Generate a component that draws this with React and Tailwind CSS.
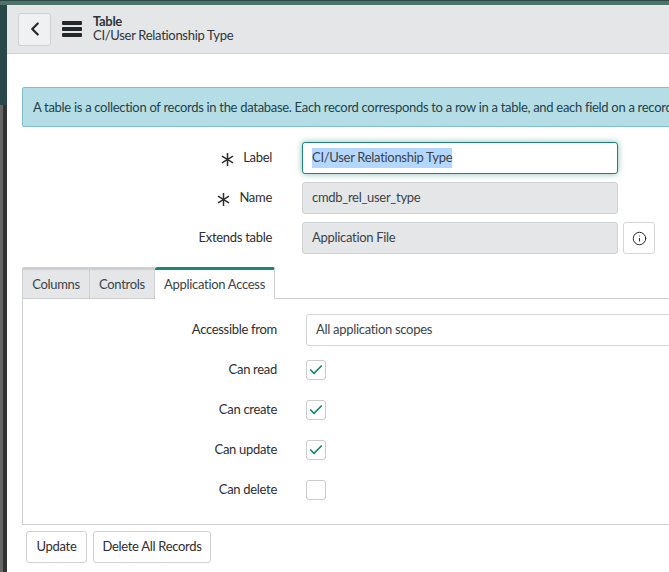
import { ChevronLeft, Info, Check } from 'lucide-react'

const font = "font-['Lato','Noto_Sans',sans-serif]"

function Star() {
  return (
    <svg width="13" height="15" viewBox="0 0 13 15" className="text-[#2e2e2e] mt-[3px]" fill="none" stroke="currentColor" strokeWidth="1.5">
      <path d="M6.5 1v13M1 4.2l11 6.6M12 4.2 1 10.8" />
    </svg>
  )
}

function FieldRow({ label, required, children, after }) {
  return (
    <div className="flex items-center h-8">
      <div className="w-[265px] flex items-center justify-end gap-[9px] text-[13px] text-[#2e2e2e]">
        {required && <Star />}
        <span>{label}</span>
      </div>
      <div className="ml-[30px] w-[316px] shrink-0">{children}</div>
      {after}
    </div>
  )
}

function ReadOnly({ value }) {
  return (
    <div className="h-8 rounded-[3px] border border-[#cfd2d5] bg-[#e4e6e8] px-[9px] flex items-center text-[13px] text-[#3c4448]">
      {value}
    </div>
  )
}

function CheckRow({ label, checked }) {
  return (
    <div className="flex items-center h-10">
      <div className="w-[254px] text-right text-[13px] text-[#2e2e2e]">{label}</div>
      <div className="ml-[29px] w-5 h-5 rounded-[3px] border border-[#c9cbcd] bg-white flex items-center justify-center">
        {checked && <Check className="w-4 h-4 text-[#1f8476]" strokeWidth={2.6} />}
      </div>
    </div>
  )
}

export default function App() {
  return (
    <div className={`w-[669px] h-[572px] overflow-hidden flex flex-col bg-white tracking-[-0.3px] ${font}`}>
      <div className="h-[5px] shrink-0 bg-[#4f7368] border-t border-[#2c4a4a]" />
      <div className="flex flex-1 min-h-0">
        {/* left edge of the window behind */}
        <div className="w-[7px] shrink-0 flex flex-col bg-[#2a4749]">
          <div className="h-[100px]" />
          <div className="flex-1 bg-[#333] border-l-[3px] border-[#666]" />
        </div>

        <div className="flex-1 min-w-0 overflow-hidden">
          {/* Header */}
          <div className="h-[49px] bg-[#e4e6e8] border-b border-[#cdcfd1] flex items-center pl-[11px]">
            <button className="w-[33px] h-[33px] rounded-[3px] border border-[#cfd1d3] bg-[#f0f1f2] flex items-center justify-center">
              <ChevronLeft className="w-[22px] h-[22px] text-[#23292b]" strokeWidth={2.4} />
            </button>
            <div className="ml-[11px] w-5 flex flex-col gap-[2.5px]">
              <div className="h-[3.5px] bg-[#23292b] rounded-[1px]" />
              <div className="h-[3.5px] bg-[#23292b] rounded-[1px]" />
              <div className="h-[3.5px] bg-[#23292b] rounded-[1px]" />
            </div>
            <div className="ml-[11px] leading-[14px] text-[#2f3538] -mt-[2px]">
              <div className="text-[13px] font-bold">Table</div>
              <div className="text-[13px] whitespace-nowrap">CI/User Relationship Type</div>
            </div>
          </div>

          <div className="pl-[15px] pt-[33px]">
            {/* Info message */}
            <div className="w-[700px] h-10 rounded-[2px] border border-[#7fbfcd] bg-[#b5dde5] pl-[10px] pt-[1px] flex items-center text-[13px] text-[#23424a] whitespace-nowrap overflow-hidden">
              A table is a collection of records in the database. Each record corresponds to a row in a table, and each field on a record
            </div>

            {/* Fields */}
            <div className="mt-[15px] -ml-[15px] flex flex-col gap-2">
              <FieldRow label="Label" required>
                <div className="h-8 rounded-[3px] border border-[#1f8476] bg-white shadow-[0_0_6px_#1f847688] pl-[9px] flex items-center text-[13px] text-[#3c4448]">
                  <span className="bg-[#b4d7ff]">CI/User Relationship Type</span>
                </div>
              </FieldRow>
              <FieldRow label="Name" required>
                <ReadOnly value="cmdb_rel_user_type" />
              </FieldRow>
              <FieldRow
                label="Extends table"
                after={
                  <button className="ml-[5px] w-8 h-8 rounded-[3px] border border-[#d3d5d7] bg-white flex items-center justify-center">
                    <Info className="w-[15px] h-[15px] text-[#2e2e2e]" strokeWidth={1.6} />
                  </button>
                }
              >
                <ReadOnly value="Application File" />
              </FieldRow>
            </div>

            {/* Tabs */}
            <div className="mt-[13px] flex h-[32px] text-[13px] text-[#3c4448]">
              <div className="w-[68px] pt-[1px] bg-[#e4e6e8] border border-[#cdcfd1] border-t-[3px] flex items-center justify-center rounded-tl-[2px]">Columns</div>
              <div className="w-[65px] pt-[1px] bg-[#e4e6e8] border-y border-r border-[#cdcfd1] border-t-[3px] flex items-center justify-center">Controls</div>
              <div className="w-[120px] pt-[1px] bg-white border-r border-[#cdcfd1] border-t-[3px] border-t-[#1f8476] flex items-center justify-center rounded-t-[2px]">Application Access</div>
              <div className="flex-1 border-b border-[#cdcfd1]" />
            </div>

            {/* Tab panel */}
            <div className="h-[226px] w-[700px] border-l border-b border-[#cdcfd1] pt-[15px]">
              <div className="flex items-center h-8">
                <div className="w-[254px] text-right text-[13px] text-[#2e2e2e]">Accessible from</div>
                <div className="ml-[29px] w-[400px] h-8 border border-[#d3d5d7] rounded-[3px] bg-white pl-[9px] flex items-center text-[13px] text-[#3c4448]">
                  All application scopes
                </div>
              </div>
              <div className="mt-[4px]">
                <CheckRow label="Can read" checked />
                <CheckRow label="Can create" checked />
                <CheckRow label="Can update" checked />
                <CheckRow label="Can delete" />
              </div>
            </div>

            {/* Buttons */}
            <div className="mt-[6px] ml-[4px] flex gap-[6px] text-[13px] text-[#2e2e2e]">
              <button className="w-[61px] h-8 rounded-[3px] border border-[#cfd1d3] bg-white">Update</button>
              <button className="w-[118px] h-8 rounded-[3px] border border-[#cfd1d3] bg-white">Delete All Records</button>
            </div>
          </div>
        </div>
      </div>
    </div>
  )
}
